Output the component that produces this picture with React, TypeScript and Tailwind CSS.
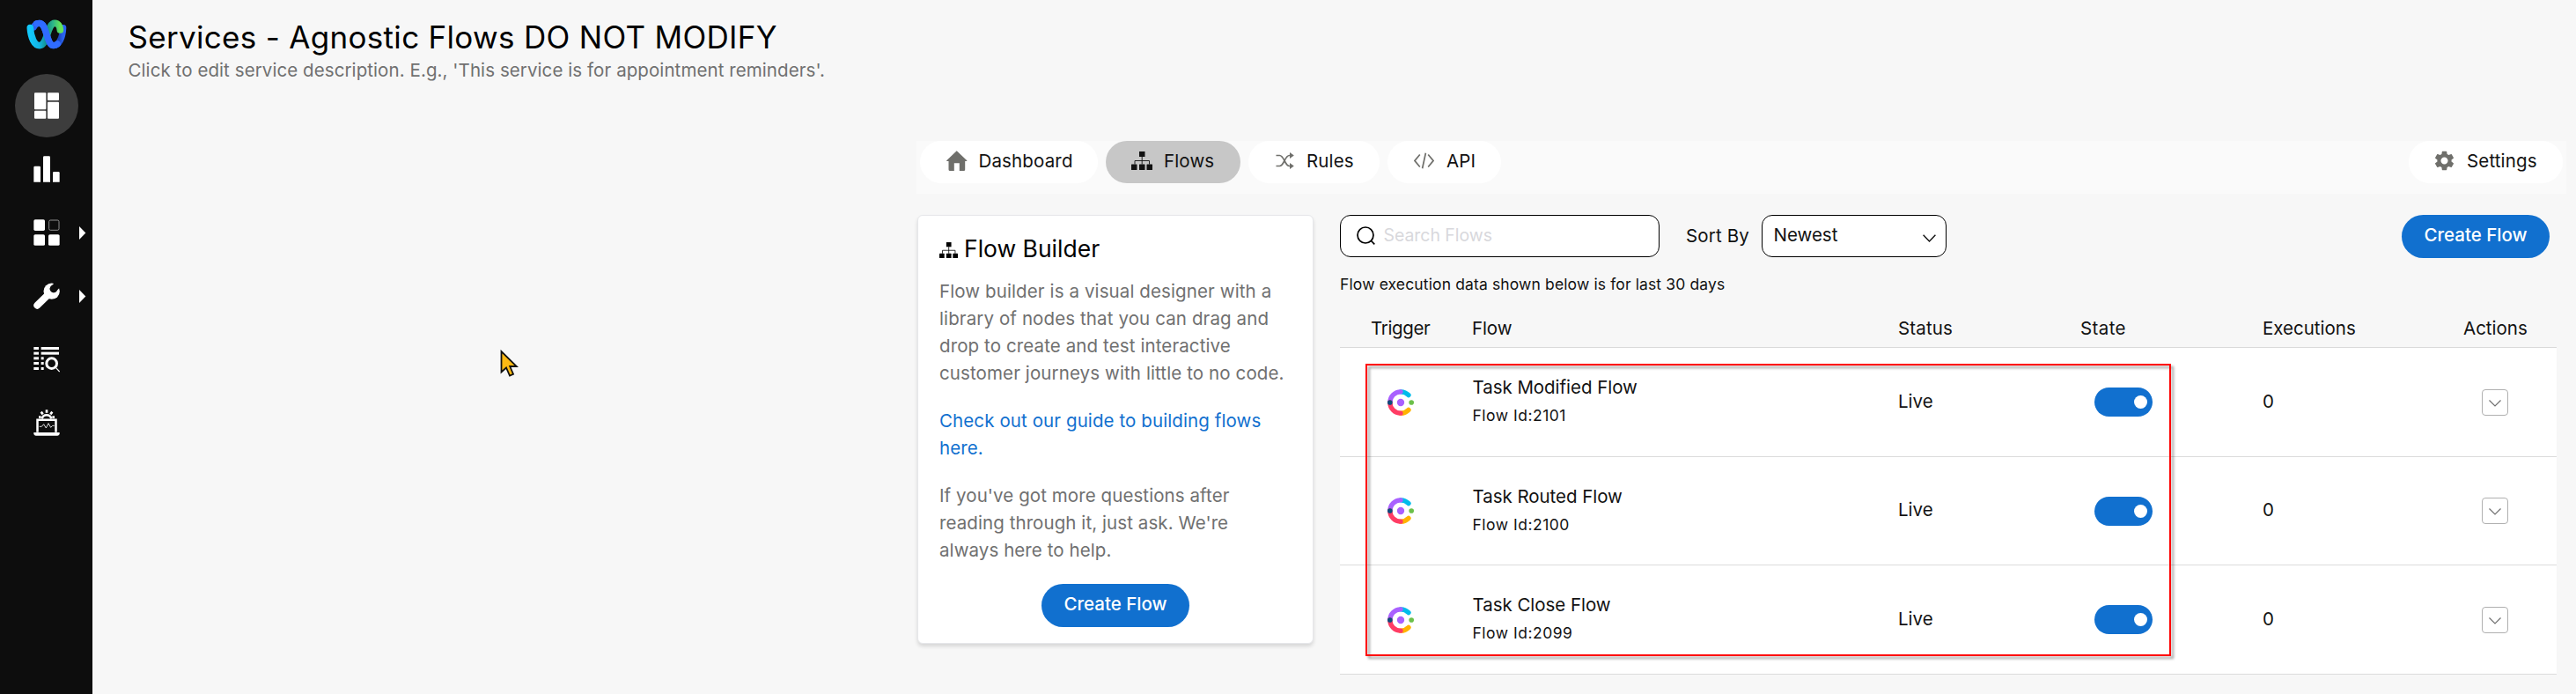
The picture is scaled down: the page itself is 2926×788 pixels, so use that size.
import type { ReactNode } from "react";
import { MdSettings } from "react-icons/md";

function WebexLogo() {
  return (
    <svg viewBox="89 65 138 102" className="h-[34px] w-[46px]" fill="none" strokeLinecap="round">
      <defs>
        <linearGradient id="wx-a" x1="0" y1="0" x2="1" y2="0">
          <stop offset="0" stopColor="#12c8fb" />
          <stop offset="0.3" stopColor="#12b5e6" />
          <stop offset="0.55" stopColor="#118f86" />
          <stop offset="0.75" stopColor="#2bb48a" />
          <stop offset="1" stopColor="#62e35a" />
        </linearGradient>
        <linearGradient id="wx-b" x1="0" y1="0" x2="1" y2="0">
          <stop offset="0" stopColor="#2a5ff0" />
          <stop offset="0.65" stopColor="#2f6bff" />
          <stop offset="0.85" stopColor="#1b45b8" />
          <stop offset="1" stopColor="#2a62f0" />
        </linearGradient>
      </defs>
      <path d="M114 92C118 82 125 78 133 78C160 78 156 154 182 154C200 154 212 128 214 94" stroke="url(#wx-b)" strokeWidth="22" />
      <path d="M102 94C104 126 116 154 134 154C162 154 158 78 186 78C197 78 203 88 204 101" stroke="url(#wx-a)" strokeWidth="23" />
      <path d="M124 79.500C127 78.500 130 78 133 78C160 78 156 154 182 154C187 154 191 152 195 149" stroke="#2f6bff" strokeWidth="22" />
    </svg>
  );
}

const sideIcons = {
  dashboard: (
    <svg viewBox="114 315 90 90" className="size-[30px]" fill="#fff">
      <rect x="117" y="316" width="40" height="57" rx="3" />
      <rect x="117" y="377.500" width="40" height="27" rx="3" />
      <rect x="162" y="316" width="39" height="26" rx="3" />
      <rect x="162" y="347" width="39" height="57" rx="3" />
    </svg>
  ),
  bars: (
    <svg viewBox="114 531 90 90" className="size-[30px]" fill="#fff">
      <path d="M115 620V570Q115 566 119 566H134Q138 566 138 570V620Z" />
      <path d="M147 620V536Q147 532 151 532H167Q171 532 171 536V620Z" />
      <path d="M180 620V589Q180 585 184 585H199Q203 585 203 589V620Z" />
    </svg>
  ),
  blocks: (
    <svg viewBox="114 57 90 90" className="size-[30px]" fill="#fff">
      <rect x="115" y="58" width="38" height="38" rx="5" />
      <rect x="167" y="60" width="34" height="34" rx="5" fill="none" stroke="#a8a8a8" strokeWidth="2.500" />
      <rect x="115" y="108.500" width="38" height="38" rx="5" />
      <rect x="165" y="108.500" width="38" height="38" rx="5" />
    </svg>
  ),
  wrench: (
    <svg viewBox="114 272 90 90" className="size-[30px]" strokeLinecap="round">
      <circle cx="176" cy="301" r="27.500" fill="#fff" />
      <path d="M127 349L164 313" stroke="#fff" strokeWidth="24" />
      <path d="M182.500 293L206 269" stroke="#0d0d0d" strokeWidth="24" />
      <circle cx="183" cy="292.500" r="13" fill="#0d0d0d" />
    </svg>
  ),
  logs: (
    <svg viewBox="114 489 90 90" className="size-[30px]" fill="#fff">
      {[492, 509, 526, 543, 561].map((y) => (
        <rect key={y} x="115" y={y} width="17" height="9" />
      ))}
      <rect x="140" y="492" width="61" height="9" />
      <rect x="140" y="509" width="61" height="9" />
      {[526, 543, 561].map((y) => (
        <rect key={y} x="140" y={y} width="9" height="9" />
      ))}
      <circle cx="176" cy="548" r="17.500" fill="#0d0d0d" stroke="#fff" strokeWidth="9" />
      <path d="M190 562L203 576" stroke="#fff" strokeWidth="3.500" />
    </svg>
  ),
  laptop: (
    <svg viewBox="114 705 90 90" className="size-[30px]" fill="none" stroke="#fff">
      <path d="M143 736A16.500 16.500 0 0 1 175 736" strokeWidth="7.500" />
      <path d="M159 716V706M146 721L140 713M172 721L178 713M140 731H132M178 731H186" strokeWidth="8" />
      <path d="M127.500 782V740H190.500V782" strokeWidth="7.500" />
      <path d="M115 783H203V787Q203 794 196 794H122Q115 794 115 787Z" fill="#fff" stroke="none" />
      <path d="M134 763L142 763L149 755L157 768L165 752L173 766L179 760H185" strokeWidth="2.600" />
    </svg>
  ),
};

const sideItems: { id: string; icon: ReactNode; active?: boolean; menu?: boolean }[] = [
  { id: "dashboard", icon: sideIcons.dashboard, active: true },
  { id: "bars", icon: sideIcons.bars },
  { id: "blocks", icon: sideIcons.blocks, menu: true },
  { id: "wrench", icon: sideIcons.wrench, menu: true },
  { id: "logs", icon: sideIcons.logs },
  { id: "laptop", icon: sideIcons.laptop },
];

function Sidebar() {
  return (
    <aside className="flex w-[105px] shrink-0 flex-col bg-[#0d0d0d]">
      <div className="h-[84px] pl-[29.5px] pt-[21.5px]">
        <WebexLogo />
      </div>
      {sideItems.map((it) => (
        <div key={it.id} className="flex h-[72px] items-center pl-[17px]">
          <div className={it.active ? "flex size-[72px] items-center justify-center rounded-full bg-[#3d3d3d]" : "flex size-[72px] items-center justify-center"}>
            {it.icon}
          </div>
          {it.menu && (
            <svg viewBox="0 0 8 15" className="ml-[1px] h-[15px] w-[8px]" fill="#fff">
              <path d="M0 0L7.300 7.500L0 15Z" />
            </svg>
          )}
        </div>
      ))}
    </aside>
  );
}

function Sitemap({ className }: { className: string }) {
  return (
    <svg viewBox="0 0 24 21" className={className} fill="currentColor">
      <rect x="9" y="0" width="6.500" height="6" />
      <path d="M12.200 6V14.500M4 14.500V10.500H20.500V14.500" fill="none" stroke="currentColor" strokeWidth="0.900" />
      <rect x="0" y="14.500" width="6.500" height="6.500" rx="0.500" />
      <rect x="9" y="14.500" width="6.500" height="6.500" rx="0.500" />
      <rect x="17.500" y="14.500" width="6.500" height="6.500" rx="0.500" />
    </svg>
  );
}

function Tab({ icon, label, className }: { icon: ReactNode; label: string; className: string }) {
  return (
    <div className={"flex h-[48px] items-center rounded-full pb-[3px] tracking-[0.15px] " + className}>
      {icon}
      <span className="pt-[2px]">{label}</span>
    </div>
  );
}

function Tabs() {
  return (
    <nav className="flex h-[60px] w-[1874px] items-start bg-[#fafafa] pl-[4px]">
      <Tab
        className="w-[202px] bg-white pl-[29.5px]"
        label="Dashboard"
        icon={
          <svg viewBox="0 0 24 23" className="mr-[13px] h-[23px] w-[24px]" fill="#6f6f6b">
            <path d="M11.700 0.300L23.300 11.200V12H21.200V21.500Q21.200 23 19.700 23H14.800V14.300H8.800V23H4Q2.500 23 2.500 21.500V12H0.200V11.200Z" />
          </svg>
        }
      />
      <Tab className="ml-[8.5px] w-[153px] bg-[#c7c7c7] pl-[29.5px]" label="Flows" icon={<Sitemap className="mr-[13px] h-[21px] w-[24px]" />} />
      <Tab
        className="ml-[9px] w-[149.5px] bg-white pl-[31px]"
        label="Rules"
        icon={
          <svg viewBox="0 0 21 19" className="mr-[14.5px] h-[19px] w-[21px]" fill="none" stroke="#6f6f6b" strokeWidth="1.700">
            <path d="M0.500 3.500H4.500C9.500 3.500 10.500 15.500 15.500 15.500H17M0.500 15.500H4.500C9.500 15.500 10.500 3.500 15.500 3.500H17" />
            <path d="M16 0L20.800 3.500L16 7ZM16 12L20.800 15.500L16 19Z" fill="#6f6f6b" stroke="none" />
          </svg>
        }
      />
      <Tab
        className="ml-[8.5px] w-[129.5px] bg-white pl-[30px]"
        label="API"
        icon={
          <svg viewBox="0 0 23 19" className="mr-[14.5px] h-[19px] w-[23px]" fill="none" stroke="#6f6f6b" strokeWidth="1.700">
            <path d="M6.800 2.500L1 9.500L6.800 16.500M16.200 2.500L22 9.500L16.200 16.500M13.400 0.800L9.600 18.200" />
          </svg>
        }
      />
      <Tab className="ml-auto mr-[4px] w-[175px] bg-white pl-[26.500px]" label="Settings" icon={<MdSettings className="mr-[12.5px] size-[27px] text-[#6f6f6b]" />} />
    </nav>
  );
}

function CreateButton({ className }: { className: string }) {
  return (
    <button className={"flex h-[49px] w-[168px] items-center justify-center rounded-full bg-[#1170cf] pb-[2px] font-medium text-white " + className}>
      Create Flow
    </button>
  );
}

function BuilderCard() {
  return (
    <section className="flex h-[487px] w-[450px] shrink-0 flex-col rounded-[6px] border border-[#e6e7ea] bg-white pl-[24px] pt-[22px] shadow-[0_3px_4px_rgba(0,0,0,0.13)]">
      <div className="flex h-[32px] items-center text-[26.5px] text-black">
        <Sitemap className="mt-[2px] mr-[7px] h-[18.5px] w-[21px]" />
        <h2>Flow Builder</h2>
      </div>
      <p className="mt-[16px] w-[400px] leading-[31px] tracking-[0.11px] text-[#707070]">
        Flow builder is a visual designer with a<br />
        library of nodes that you can drag and<br />
        drop to create and test interactive<br />
        customer journeys with little to no code.
      </p>
      <a className="mt-[23px] leading-[31px] tracking-[0.1px] text-[#1170cf]">
        Check out our guide to building flows<br />
        here.
      </a>
      <p className="mt-[22.5px] leading-[31px] tracking-[0.08px] text-[#707070]">
        If you've got more questions after<br />
        reading through it, just ask. We're<br />
        always here to help.
      </p>
      <CreateButton className="ml-[116px] mt-[23.5px]" />
    </section>
  );
}

function TriggerIcon() {
  return (
    <svg viewBox="0 0 90 90" className="ml-[54px] size-[30px]" fill="none" strokeLinecap="round" strokeWidth="16">
      <path d="M45 8.500A36.500 36.500 0 0 1 72 20" stroke="#00bceb" />
      <path d="M45 81.500A36.500 36.500 0 0 0 72 70" stroke="#ffb400" />
      <path d="M8.500 45A36.500 36.500 0 0 1 45 8.500" stroke="#a960ff" />
      <path d="M8.500 45A36.500 36.500 0 0 0 45 81.500" stroke="#ff3c64" />
      <circle cx="8.500" cy="45" r="8.500" fill="#0f4b7c" />
      <circle cx="45" cy="45" r="12.500" fill="#a960ff" />
      <circle cx="81.500" cy="45" r="8.500" fill="#6cc04a" />
    </svg>
  );
}

const flows = [
  { name: "Task Modified Flow", id: "2101", h: "h-[124px]" },
  { name: "Task Routed Flow", id: "2100", h: "h-[123px]" },
  { name: "Task Close Flow", id: "2099", h: "h-[124px]" },
];

const columns = "grid grid-cols-[150px_484px_207px_207px_228px_106px] ";

function FlowTable() {
  return (
    <div className="relative w-[1382px]">
      <div className={columns + "h-[47px] border-b border-[#d9d9d9] leading-[30px] pt-[10px]"}>
        <span className="pl-[35px] tracking-[-0.36px]">Trigger</span>
        <span className="tracking-[-0.1px]">Flow</span>
        <span className="tracking-[0.15px]">Status</span>
        <span className="tracking-[0.4px]">State</span>
        <span>Executions</span>
        <span>Actions</span>
      </div>
      {flows.map((f) => (
        <div key={f.id} className={columns + "items-center border-b border-[#dcdcdc] bg-white " + f.h}>
          <TriggerIcon />
          <div className="self-start pl-[0.5px] pt-[29.500px]">
            <div className="leading-[30px] tracking-[-0.04px]">{f.name}</div>
            <div className="mt-[5px] text-[17.5px] leading-[24px] tracking-[0.5px]">Flow Id:{f.id}</div>
          </div>
          <span className="pb-[1px]">Live</span>
          <span className="ml-[16px] flex h-[33px] w-[66px] items-center justify-end rounded-full bg-[#1170cf] pr-[6px]">
            <span className="size-[15px] rounded-full bg-white" />
          </span>
          <span className="pb-[1px]">0</span>
          <span className="ml-[21px] flex size-[30px] items-center justify-center rounded-[4px] border border-[#b0b0b0]">
            <svg viewBox="0 0 14 8" className="mt-[2px] h-[8px] w-[14px]" fill="none" stroke="#707070" strokeWidth="1.200">
              <path d="M0.500 0.500L7 7L13.500 0.500" />
            </svg>
          </span>
        </div>
      ))}
      <div className="pointer-events-none absolute left-[29px] top-[65px] h-[332px] w-[915px] border-2 border-[#ff0000] drop-shadow-[3px_3px_1.5px_rgba(0,0,0,0.4)]" />
    </div>
  );
}

function Toolbar() {
  return (
    <div className="flex h-[49px] w-[1382px] items-start">
      <div className="flex h-[48px] w-[363px] items-center rounded-[12px] border border-black bg-white pl-[17.5px]">
        <svg viewBox="0 0 21 21" className="mb-[1px] mr-[10px] h-[21px] w-[21px]" fill="none" stroke="#000" strokeWidth="1.700">
          <circle cx="10" cy="10" r="9" />
          <path d="M16 16L20.300 20.300" />
        </svg>
        <span className="pb-[1px] text-[19.5px] tracking-[-0.05px] text-[#d8d8dc]">Search Flows</span>
      </div>
      <span className="ml-[30px] mr-[14px] mt-[9px] leading-[30px] tracking-[0.15px]">Sort By</span>
      <div className="flex h-[48px] w-[210px] items-center rounded-[12px] border border-black bg-white pl-[12.5px] pr-[11px]">
        <span className="pb-[2px]">Newest</span>
        <svg viewBox="0 0 15 9" className="ml-auto mt-[4px] h-[9px] w-[15px]" fill="none" stroke="#111" strokeWidth="1.400">
          <path d="M0.600 0.800L7.500 8L14.400 0.800" />
        </svg>
      </div>
      <CreateButton className="ml-auto mr-[8px]" />
    </div>
  );
}

function Pointer() {
  return (
    <svg viewBox="0 0 22 32" className="absolute left-[568px] top-[397px] h-[32px] w-[22px]">
      <path d="M1.500 2V25.500L7 20.500L11 29.500L15 27.700L11.200 19H18.800Z" fill="#fdb913" stroke="#111" strokeWidth="1.800" />
    </svg>
  );
}

export default function App() {
  return (
    <div className="relative flex h-[788px] w-[2926px] overflow-hidden bg-[#f7f7f7] font-['Inter',sans-serif] text-[20.5px] text-[#121212]">
      <Sidebar />
      <div className="flex flex-1 flex-col">
        <header className="h-[160px] pl-[40.5px] pt-[20px]">
          <h1 className="text-[35px] leading-[44px] tracking-[0.31px] text-black">Services - Agnostic Flows DO NOT MODIFY</h1>
          <p className="mt-[1px] leading-[30px] tracking-[0.08px] text-[#707070]">
            Click to edit service description. E.g., 'This service is for appointment reminders'.
          </p>
        </header>
        <div className="flex flex-col pl-[936px]">
          <Tabs />
          <div className="mt-[24px] flex pl-[1px]">
            <BuilderCard />
            <main className="ml-[30px] flex flex-col">
              <Toolbar />
              <p className="mt-[17.500px] text-[17.5px] leading-[24px] tracking-[0.13px]">Flow execution data shown below is for last 30 days</p>
              <div className="mt-[13.500px]">
                <FlowTable />
              </div>
            </main>
          </div>
        </div>
      </div>
      <Pointer />
    </div>
  );
}
